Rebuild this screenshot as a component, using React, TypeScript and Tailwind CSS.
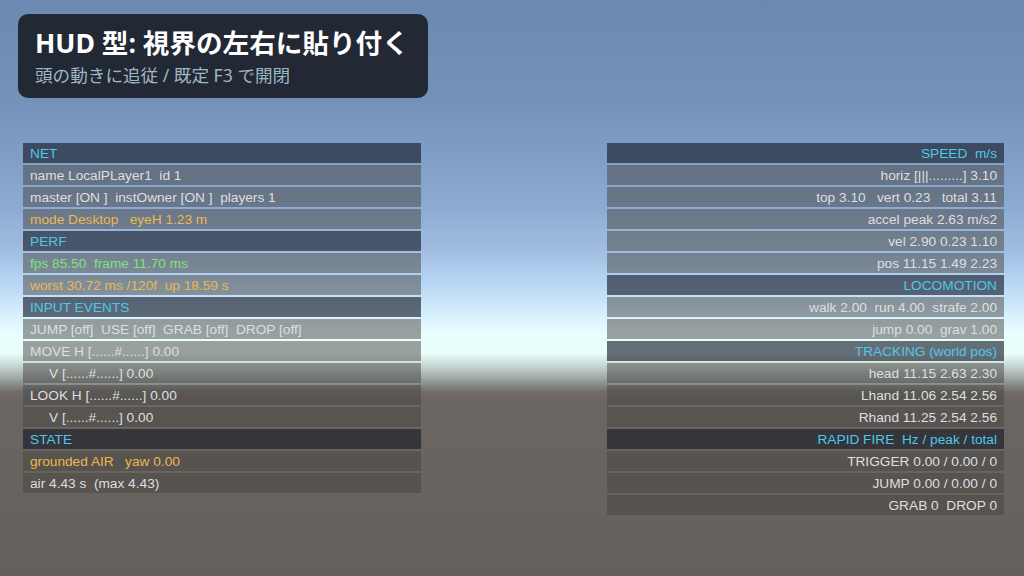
import React from "react";

type Tone = "head" | "text" | "yellow" | "green";
type Row = { t: string; tone: Tone };

const left: Row[] = [
  { t: "NET", tone: "head" },
  { t: "name LocalPLayer1  id 1", tone: "text" },
  { t: "master [ON ]  instOwner [ON ]  players 1", tone: "text" },
  { t: "mode Desktop   eyeH 1.23 m", tone: "yellow" },
  { t: "PERF", tone: "head" },
  { t: "fps 85.50  frame 11.70 ms", tone: "green" },
  { t: "worst 30.72 ms /120f  up 18.59 s", tone: "yellow" },
  { t: "INPUT EVENTS", tone: "head" },
  { t: "JUMP [off]  USE [off]  GRAB [off]  DROP [off]", tone: "text" },
  { t: "MOVE H [......#......] 0.00", tone: "text" },
  { t: "     V [......#......] 0.00", tone: "text" },
  { t: "LOOK H [......#......] 0.00", tone: "text" },
  { t: "     V [......#......] 0.00", tone: "text" },
  { t: "STATE", tone: "head" },
  { t: "grounded AIR   yaw 0.00", tone: "yellow" },
  { t: "air 4.43 s  (max 4.43)", tone: "text" },
];

const right: Row[] = [
  { t: "SPEED  m/s", tone: "head" },
  { t: "horiz [|||.........] 3.10", tone: "text" },
  { t: "top 3.10   vert 0.23   total 3.11", tone: "text" },
  { t: "accel peak 2.63 m/s2", tone: "text" },
  { t: "vel 2.90 0.23 1.10", tone: "text" },
  { t: "pos 11.15 1.49 2.23", tone: "text" },
  { t: "LOCOMOTION", tone: "head" },
  { t: "walk 2.00  run 4.00  strafe 2.00", tone: "text" },
  { t: "jump 0.00  grav 1.00", tone: "text" },
  { t: "TRACKING (world pos)", tone: "head" },
  { t: "head 11.15 2.63 2.30", tone: "text" },
  { t: "Lhand 11.06 2.54 2.56", tone: "text" },
  { t: "Rhand 11.25 2.54 2.56", tone: "text" },
  { t: "RAPID FIRE  Hz / peak / total", tone: "head" },
  { t: "TRIGGER 0.00 / 0.00 / 0", tone: "text" },
  { t: "JUMP 0.00 / 0.00 / 0", tone: "text" },
  { t: "GRAB 0  DROP 0", tone: "text" },
];

const bgCls: Record<Tone, string> = {
  head: "bg-[rgba(22,25,38,0.63)]",
  text: "bg-[rgba(70,68,64,0.5)]",
  yellow: "bg-[rgba(70,68,64,0.5)]",
  green: "bg-[rgba(70,68,64,0.5)]",
};
const txtCls: Record<Tone, string> = {
  head: "text-[#4fc8e8]",
  text: "text-[#dedfe0]",
  yellow: "text-[#ecb84c]",
  green: "text-[#80e27c]",
};

function Panel({ rows, align }: { rows: Row[]; align: "left" | "right" }) {
  return (
    <div className="flex flex-col gap-[2px]">
      {rows.map((r, i) => (
        <div
          key={i}
          className={`h-[20px] px-[7px] whitespace-pre text-[13.7px] leading-[20px] pt-[1px] ${bgCls[r.tone]} ${txtCls[r.tone]} ${
            align === "right" ? "text-right" : "text-left"
          }`}
        >
          {r.t}
        </div>
      ))}
    </div>
  );
}

export default function App() {
  return (
    <div className="w-[1024px] h-[576px] overflow-hidden font-['Liberation_Sans',Arial,sans-serif] bg-[linear-gradient(to_bottom,#6c89b2_0px,#7391b9_100px,#8aa8d0_200px,#a0bde0_250px,#b8d6f4_283px,#d8f2ff_317px,#e8fefe_333px,#eafffc_353px,#c5d3cf_367px,#97a09d_380px,#716c69_392px,#6b6662_400px,#65605b_576px)]">
      <div className="pt-[14px] pl-[18px]">
        <div className="w-[410px] h-[84px] rounded-[10px] bg-[#222834] px-[17px] pt-[14px] font-['Noto_Sans','Noto_Sans_CJK_JP',sans-serif]">
          <div className="text-[26.6px] leading-[30px] font-bold text-white whitespace-pre">
            HUD 型: 視界の左右に貼り付く
          </div>
          <div className="mt-[6px] text-[17.6px] leading-[22px] text-[#9fb6c6] whitespace-pre">
            頭の動きに追従 / 既定 F3 で開閉
          </div>
        </div>
      </div>
      <div className="flex justify-between pl-[23px] pr-[20px] mt-[45px]">
        <div className="w-[398px]">
          <Panel rows={left} align="left" />
        </div>
        <div className="w-[397px]">
          <Panel rows={right} align="right" />
        </div>
      </div>
    </div>
  );
}
